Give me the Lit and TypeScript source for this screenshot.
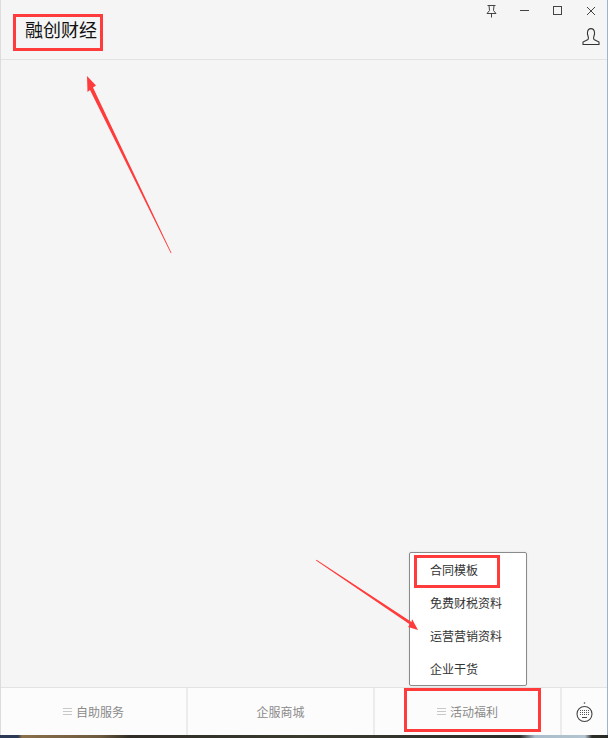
import { LitElement, html, css } from "lit";
import { customElement } from "lit/decorators.js";

const keyDots = [9, 11, 13]
  .flatMap((y) => [5, 7, 9, 11, 13].map((x) => `M${x} ${y}h1v1h-1z`))
  .join("");

@customElement("app-root")
export class AppRoot extends LitElement {
  static styles = css`
    :host { display: block; width: 608px; height: 738px; position: relative; overflow: hidden; font-family: "Noto Sans CJK SC", "Noto Sans", sans-serif; }
    .page { height: 738px; display: flex; flex-direction: column; background: linear-gradient(90deg, #2d3a55 0, #2d3a55 18px, #8a6f4a 22px, #6d5a3e 100px, #2f2d26 130px, #3a3a2e 300px, #2b2c27 520px, #a9bccb 535px, #b4c4d0 585px, #2a2c28 592px); }
    .win { height: 735px; flex: none; display: flex; flex-direction: column; background: #f5f5f5; border-left: 1px solid #dcdcdc; border-right: 1px solid #9fb3cc; box-sizing: border-box; }
    .head { height: 60px; flex: none; box-sizing: border-box; border-bottom: 1px solid #e3e3e3; display: flex; justify-content: space-between; }
    .title { font-size: 18px; line-height: 24px; color: #111; padding: 17px 0 0 24px; }
    .controls { display: flex; flex-direction: column; align-items: flex-end; }
    .wbtns { display: block; height: 22px; }
    .user { margin: 6px 7px 0 0; display: block; }
    .body { flex: 1; }
    .foot { height: 48px; flex: none; box-sizing: border-box; border-top: 1px solid #e3e3e3; background: #fcfcfc; display: grid; grid-template-columns: 187px 187px 187px 1fr; }
    .tab { display: flex; align-items: center; justify-content: center; gap: 4px; font-size: 12px; color: #8a8a8a; border-right: 2px solid #ececec; }
    .tab:last-child { border-right: none; }
    .burger { width: 9px; height: 7px; border-top: 1px solid #c8c8c8; border-bottom: 1px solid #c8c8c8; position: relative; box-sizing: border-box; }
    .burger::after { content: ""; position: absolute; left: 0; right: 0; top: 2px; height: 1px; background: #c8c8c8; }
    .menu { position: absolute; left: 409px; top: 552px; width: 118px; height: 134px; box-sizing: border-box; background: #fff; border: 1px solid #8a8a8a; border-radius: 2px; box-shadow: 0 0 3px rgba(0,0,0,.08); }
    .menu div { height: 33px; line-height: 33px; padding-left: 20px; font-size: 12px; color: #333; }
    .marks { position: absolute; left: 0; top: 0; pointer-events: none; }
  `;

  render() {
    return html`
      <div class="page">
        <div class="win">
          <div class="head">
            <div class="title">融创财经</div>
            <div class="controls">
              <svg class="wbtns" width="130" height="22" viewBox="0 0 130 22" fill="none" stroke="#444" stroke-width="1">
                <path d="M10.500 5.500h8M12 5.500l.5 5-2.500 3h9l-2.500-3 .5-5M14.500 13.500v4" />
                <path d="M43 10.500h9" />
                <rect x="76.500" y="6.500" width="8" height="8" />
                <path d="M110 7l8 8M118 7l-8 8" />
              </svg>
              <svg class="user" width="18" height="18" viewBox="0 0 18 18" fill="none" stroke="#333" stroke-width="1.100">
                <path d="M1 16.500h16v-2.500l-5-2.500c-.8-.8-.6-2 0-3.500.5-1.300.7-2.500.5-3.700C12.200 2 10.800.6 9 .6S5.800 2 5.500 4.300c-.2 1.200 0 2.400.5 3.700.6 1.500.8 2.700 0 3.500l-5 2.500z" />
              </svg>
            </div>
          </div>
          <div class="body"></div>
          <div class="foot">
            <div class="tab"><span class="burger"></span>自助服务</div>
            <div class="tab">企服商城</div>
            <div class="tab"><span class="burger"></span>活动福利</div>
            <div class="tab">
              <svg width="19" height="22" viewBox="0 0 19 22" fill="none">
                <circle cx="9.500" cy="13" r="7.500" stroke="#444" stroke-width="1.100" />
                <circle cx="9.500" cy="2" r=".8" fill="#444" />
                <path d=${keyDots} fill="#555" />
                <path d="M7 16.500h5" stroke="#444" stroke-width="1" />
              </svg>
            </div>
          </div>
        </div>
      </div>
      <div class="menu">
        <div>合同模板</div>
        <div>免费财税资料</div>
        <div>运营营销资料</div>
        <div>企业干货</div>
      </div>
      <svg class="marks" width="608" height="738" viewBox="0 0 608 738" fill="none">
        <rect x="14.500" y="15.500" width="87" height="34" stroke="#ff3b3b" stroke-width="3" />
        <rect x="415.500" y="556.500" width="83" height="30" stroke="#ff3b3b" stroke-width="3" />
        <rect x="405.500" y="689.500" width="134" height="41" stroke="#ff3b3b" stroke-width="3" />
        <path fill="#ff3b3b" d="M171.500 253 L170.800 253.300 L90 90 L87.500 92 L87 76 L96 85.500 L93 87.500 Z" />
        <path fill="#ff3b3b" d="M316 560.500 L316.500 559.800 L411.500 622 L412 619 L418 630 L408 627 L410 624.500 Z" />
      </svg>
    `;
  }
}
